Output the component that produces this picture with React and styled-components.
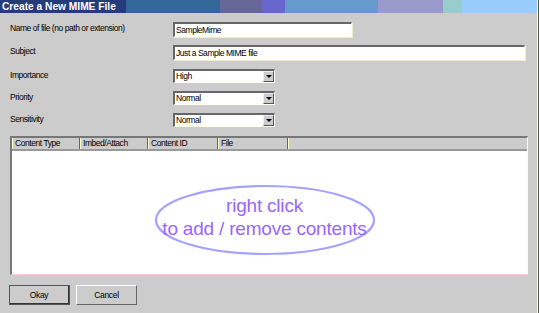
import React from "react";
import styled, { createGlobalStyle } from "styled-components";

const Global = createGlobalStyle`
  html, body { margin: 0; padding: 0; background: #cccccc; }
  body { width: 539px; height: 313px; overflow: hidden; }
  * { box-sizing: border-box; }
`;

const FONT = `"Liberation Sans", Arial, sans-serif`;

const Window = styled.div`
  width: 539px;
  height: 313px;
  display: flex;
  flex-direction: column;
  background: #cccccc;
  border-right: 1px solid #555544;
  box-shadow: inset -1px 0 0 #ffffcc;
  font-family: ${FONT};
  font-size: 8.5px;
  letter-spacing: -0.45px;
  color: #000;
`;

const TitleBar = styled.div`
  height: 13px;
  flex: none;
  margin-right: 1px;
  display: flex;
  align-items: center;
  padding-left: 2px;
  color: #ffffff;
  font-weight: bold;
  font-size: 10.2px;
  letter-spacing: 0;
  background: linear-gradient(
    to right,
    #263c7a 0px, #263c7a 126px,
    #336699 126px, #336699 220px,
    #666699 220px, #666699 262px,
    #6666cc 262px, #6666cc 285px,
    #6699cc 285px, #6699cc 378px,
    #9999cc 378px, #9999cc 443px,
    #99cccc 443px, #99cccc 462px,
    #99ccff 462px
  );
`;

const Body = styled.div`
  flex: 1;
  display: flex;
  flex-direction: column;
  padding: 9px 11px 0 10px;
`;

const Form = styled.div`
  display: grid;
  grid-template-columns: 163px 1fr;
  row-gap: 8px;
  align-items: center;
`;

const Label = styled.div`
  line-height: 12px;
  margin-top: ${(p) => p.$shift || 0}px;
  align-self: start;
`;

const TextInput = styled.div`
  width: ${(p) => p.$w}px;
  height: 15px;
  background: #ffffff;
  border-top: 2px solid #666666;
  border-left: 2px solid #666666;
  border-right: 1px solid #ffffee;
  border-bottom: 1px solid #ffffee;
  box-shadow: 1px 1px 0 #eeeecc;
  padding-left: 1px;
  line-height: 12px;
  white-space: nowrap;
`;

const Select = styled.div`
  width: 102px;
  height: 14px;
  display: flex;
  background: #ffffff;
  border-top: 2px solid #666666;
  border-left: 2px solid #666666;
  border-right: 1px solid #ffffff;
  border-bottom: 1px solid #ffffee;
  margin-top: ${(p) => p.$shift || 0}px;
`;

const SelectValue = styled.div`
  flex: 1;
  padding-left: 1px;
  line-height: 11px;
`;

const DropButton = styled.div`
  width: 11px;
  flex: none;
  background: #cccccc;
  border-top: 1px solid #eeeeee;
  border-left: 1px solid #eeeeee;
  border-right: 1px solid #555555;
  border-bottom: 1px solid #555555;
  display: flex;
  align-items: center;
  justify-content: center;
  &::after {
    content: "";
    width: 0;
    height: 0;
    border-left: 3px solid transparent;
    border-right: 3px solid transparent;
    border-top: 3px solid #000;
  }
`;

const ListView = styled.div`
  margin-top: 9px;
  height: 139px;
  width: 518px;
  display: flex;
  flex-direction: column;
  background: #ffffff;
  border-top: 2px solid #777777;
  border-left: 2px solid #777777;
  border-right: 1px solid #ffffcc;
  border-bottom: 1px solid #ffcccc;
`;

const Header = styled.div`
  display: flex;
  height: 13px;
  flex: none;
  background: #cccccc;
  border-bottom: 2px solid #999999;
`;

const HeadCell = styled.div`
  width: ${(p) => (p.$w ? `${p.$w}px` : "auto")};
  flex: ${(p) => (p.$w ? "none" : "1")};
  border-left: 1px solid #ffffcc;
  border-right: 1px solid #666666;
  padding-left: 2px;
  line-height: 10px;
  &:last-child { border-right: none; }
`;

const ListBody = styled.div`
  flex: 1;
  display: flex;
  justify-content: center;
  padding-top: 33px;
  padding-right: 10px;
`;

const Hint = styled.div`
  position: relative;
  width: 222px;
  height: 72px;
  padding-bottom: 7px;
  display: flex;
  flex-direction: column;
  align-items: center;
  justify-content: center;
  color: #9966ff;
  font-size: 19px;
  line-height: 23px;
  letter-spacing: -0.2px;
`;

const HintOval = styled.svg`
  position: absolute;
  inset: 0;
  width: 100%;
  height: 100%;
  overflow: visible;
`;

const HintLine = styled.span`
  position: relative;
  white-space: nowrap;
`;

const Footer = styled.div`
  display: flex;
  gap: 6px;
  padding: 10px 0 0 0;
  margin-left: -1px;
`;

const Button = styled.button`
  width: 61px;
  height: 20px;
  font-family: ${FONT};
  font-size: 8.5px;
  letter-spacing: -0.3px;
  color: #000;
  background: #cccccc;
  padding: 0;
  border-top: 1px solid #ffffff;
  border-left: 1px solid #ffffff;
  border-right: ${(p) => (p.$default ? "2px solid #333333" : "1px solid #666666")};
  border-bottom: ${(p) => (p.$default ? "2px solid #333333" : "1px solid #666666")};
  outline: ${(p) => (p.$default ? "1px solid #555555" : "none")};
  outline-offset: -1px;
`;

export default function App() {
  return (
    <>
      <Global />
      <Window>
        <TitleBar>Create a New MIME File</TitleBar>
        <Body>
          <Form>
            <Label>Name of file (no path or extension)</Label>
            <TextInput $w={179}>SampleMime</TextInput>
            <Label>Subject</Label>
            <TextInput $w={352}>Just a Sample MIME file</TextInput>
            <Label $shift={1}>Importance</Label>
            <Select $shift={1}>
              <SelectValue>High</SelectValue>
              <DropButton />
            </Select>
            <Label>Priority</Label>
            <Select>
              <SelectValue>Normal</SelectValue>
              <DropButton />
            </Select>
            <Label>Sensitivity</Label>
            <Select>
              <SelectValue>Normal</SelectValue>
              <DropButton />
            </Select>
          </Form>
          <ListView>
            <Header>
              <HeadCell $w={68}>Content Type</HeadCell>
              <HeadCell $w={68}>Imbed/Attach</HeadCell>
              <HeadCell $w={70}>Content ID</HeadCell>
              <HeadCell $w={70}>File</HeadCell>
              <HeadCell />
            </Header>
            <ListBody>
              <Hint>
                <HintOval viewBox="0 0 222 72" preserveAspectRatio="none">
                  <ellipse cx="111" cy="36" rx="109" ry="34" fill="none" stroke="#a3a3ff" strokeWidth="2.2" />
                </HintOval>
                <HintLine>right click</HintLine>
                <HintLine>to add / remove contents</HintLine>
              </Hint>
            </ListBody>
          </ListView>
          <Footer>
            <Button $default>Okay</Button>
            <Button>Cancel</Button>
          </Footer>
        </Body>
      </Window>
    </>
  );
}
